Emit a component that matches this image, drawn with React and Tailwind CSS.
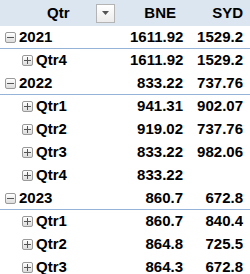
import React from "react";

const rows = [
  { label: "2021", year: true, bne: "1611.92", syd: "1529.2" },
  { label: "Qtr4", bne: "1611.92", syd: "1529.2" },
  { label: "2022", year: true, bne: "833.22", syd: "737.76" },
  { label: "Qtr1", bne: "941.31", syd: "902.07" },
  { label: "Qtr2", bne: "919.02", syd: "737.76" },
  { label: "Qtr3", bne: "833.22", syd: "982.06" },
  { label: "Qtr4", bne: "833.22", syd: "" },
  { label: "2023", year: true, bne: "860.7", syd: "672.8" },
  { label: "Qtr1", bne: "860.7", syd: "840.4" },
  { label: "Qtr2", bne: "864.8", syd: "725.5" },
  { label: "Qtr3", bne: "864.3", syd: "672.8" },
];

function Toggle({ open }) {
  return (
    <span className="relative w-[11px] h-[11px] border border-[#9a9a9a] rounded-[2px] bg-gradient-to-b from-[#ffffff] to-[#dcdcdc] flex items-center justify-center shrink-0">
      <span className="absolute w-[7px] h-[1px] bg-[#555]" />
      {!open && <span className="absolute w-[1px] h-[7px] bg-[#555]" />}
    </span>
  );
}

export default function App() {
  return (
    <div
      className="w-[250px] h-[274px] overflow-hidden bg-white text-black font-bold text-[15px]"
      style={{ fontFamily: '"Liberation Sans", Arial, sans-serif' }}
    >
      <div className="flex h-[26px] bg-[#dce6f1] items-center">
        <div className="w-[130px] flex items-center h-full">
          <span className="ml-[47px] w-[49px]">Qtr</span>
          <span className="w-[19px] h-[19px] border border-[#b4b4b4] bg-gradient-to-b from-[#ffffff] to-[#ececec] flex items-center justify-center">
            <svg width="7" height="4" viewBox="0 0 7 4">
              <path d="M0 0h7L3.5 4z" fill="#555" />
            </svg>
          </span>
        </div>
        <div className="w-[53px] text-right pr-[7px]">BNE</div>
        <div className="w-[60px] text-right">SYD</div>
      </div>
      {rows.map((r, i) => (
        <div
          key={i}
          className={
            "flex h-[23px] items-center" +
            (r.year ? " border-b border-[#95b3d7]" : "")
          }
        >
          <div className="w-[130px] flex items-center">
            {r.year ? (
              <span className="ml-[5px] flex items-center gap-[3px]">
                <Toggle open />
                <span>{r.label}</span>
              </span>
            ) : (
              <span className="ml-[22px] flex items-center gap-[3px]">
                <Toggle />
                <span>{r.label}</span>
              </span>
            )}
          </div>
          <div className="w-[53px] text-right">{r.bne}</div>
          <div className="w-[60px] text-right">{r.syd}</div>
        </div>
      ))}
    </div>
  );
}
